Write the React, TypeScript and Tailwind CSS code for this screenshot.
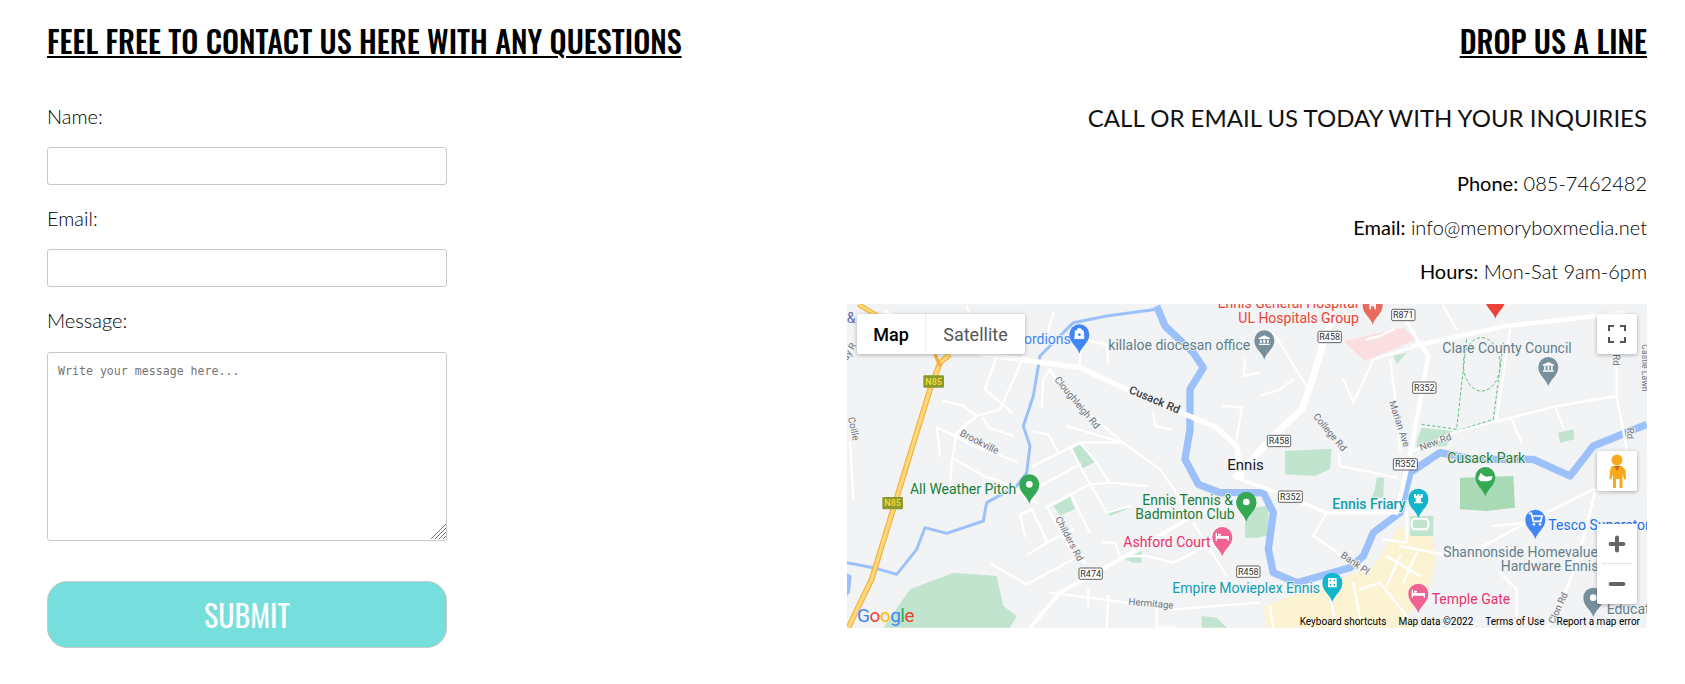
import { Plus, Minus } from "lucide-react";

const HEAD = "font-['Oswald','Liberation_Sans_Narrow','Roboto_Condensed','Liberation_Sans',sans-serif]";

// roads are traced in zoomed-up coords, the groups below scale them back down
const leftMinor: string[] = [
  "310,315 370,330 410,360 480,340 530,230 550,180",
  "410,360 350,410 335,500 330,570",
  "290,395 345,420 400,450 530,497",
  "290,395 300,480",
  "345,490 440,545 470,550 590,620",
  "430,365 445,395 520,420",
  "435,280 515,350",
  "435,280 470,180",
  "578,407 625,415 655,470",
  "580,510 720,440 850,440",
  "600,570 720,505",
  "680,390 850,440 960,520 1010,590 1045,650",
  "720,440 770,500 810,560 920,570",
  "690,450 720,510 800,650 870,630",
  "625,630 750,565 810,560",
  "540,655 575,640 620,735",
  "540,655 555,720",
  "565,775 620,740 700,700",
  "695,600 750,710",
  "620,630 690,760 735,800",
  "790,740 825,740 840,780 920,780 1000,800",
  "455,805 560,865 700,790",
  "30,440 40,610",
  "605,335 610,250 630,220",
  "630,220 680,300 850,440",
  "720,160 720,210",
  "750,135 800,145 805,200",
  "640,50 620,120",
  "380,30 385,50",
  "940,350 945,390 995,400",
  "1150,330 1205,335 1190,430",
  "1215,190 1210,240 1260,230",
  "1000,800 1120,740",
  "1060,680 1160,840",
  "630,890 860,920 1000,940 1260,920",
  "745,880 745,930",
  "805,900 800,995",
  "950,930 950,995 1010,995",
];

const rightMinor: string[] = [
  "310,250 340,320 400,190 530,150",
  "60,300 120,280 160,250",
  "100,110 200,270",
  "295,470 300,510 470,545",
  "945,330 970,395",
  "815,370 845,440",
  "810,100 770,370",
  "450,190 465,300 480,460",
  "510,470 640,410 950,330 1130,300",
  "1130,180 1130,300 1160,460",
  "760,690 860,680 1060,580 1110,590",
  "220,720 260,650",
  "220,720 350,810",
  "480,750 610,775 720,755 860,680",
  "430,730 500,740 500,640",
  "440,780 540,840",
  "360,880 420,860 500,960",
  "340,860 365,995",
  "270,900 290,995",
  "90,930 100,995",
  "480,780 440,870",
  "530,770 490,860",
  "780,830 830,880 830,960",
  "610,30 650,100",
  "380,130 420,120 460,100",
];

function Pin({ x, y, color, dot }: { x: number; y: number; color: string; dot?: boolean }) {
  return (
    <g>
      <path
        d={`M${x} ${y + 58} C${x - 6} ${y + 36} ${x - 30} ${y + 26} ${x - 30} ${y} A30 30 0 1 1 ${x + 30} ${y} C${x + 30} ${y + 26} ${x + 6} ${y + 36} ${x} ${y + 58}Z`}
        fill={color}
      />
      {dot && <circle cx={x} cy={y} r={10} fill="#fff" />}
    </g>
  );
}

function Bed({ x, y }: { x: number; y: number }) {
  return (
    <g fill="#fff">
      <path d={`M${x - 20} ${y - 12}h4v10h36v14h-4v-6h-32v6h-4z`} />
      <rect x={x - 13} y={y - 9} width={9} height={6} rx={2} />
    </g>
  );
}

function Museum({ x, y }: { x: number; y: number }) {
  return (
    <path
      d={`M${x} ${y - 14}l17 8v3h-34v-3zM${x - 13} ${y - 1}h5v10h-5zM${x - 3} ${y - 1}h6v10h-6zM${x + 8} ${y - 1}h5v10h-5zM${x - 16} ${y + 11}h32v4h-32z`}
      fill="#fff"
    />
  );
}

function Shield({ x, y, text, w = 70 }: { x: number; y: number; text: string; w?: number }) {
  return (
    <g>
      <rect x={x} y={y} width={w} height={34} rx={4} fill="#fff" stroke="#444" strokeWidth={2.5} />
      <text x={x + w / 2} y={y + 26} textAnchor="middle" fontSize={27} fill="#333">
        {text}
      </text>
    </g>
  );
}

function N85({ x, y }: { x: number; y: number }) {
  return (
    <g>
      <rect x={x} y={y} width={62} height={37} rx={3} fill="#8b9a2c" />
      <text x={x + 31} y={y + 28} textAnchor="middle" fontSize={27} fontWeight={500} fill="#f6dd3a">
        N85
      </text>
    </g>
  );
}

function Label({
  x,
  y,
  color,
  size = 42,
  rot,
  weight,
  children,
}: {
  x: number;
  y: number;
  color: string;
  size?: number;
  rot?: number;
  weight?: number;
  children: string;
}) {
  return (
    <text
      x={x}
      y={y}
      fill={color}
      fontSize={size}
      fontWeight={weight}
      stroke="#f2f3f5"
      strokeWidth={5}
      paintOrder="stroke"
      transform={rot ? `rotate(${rot} ${x} ${y})` : undefined}
    >
      {children}
    </text>
  );
}

const LEFT = "translate(-7 -8) scale(0.33333)";
const RIGHT = "translate(393 -8) scale(0.33333)";

function MapDrawing() {
  return (
    <svg viewBox="0 0 800 324" className="block h-full w-full font-['Roboto',sans-serif]">
      <rect width="800" height="324" fill="#f2f3f5" />
      <g transform={LEFT}>
        <g fill="#c0e4cd">
          <polygon points="130,995 210,880 340,830 470,840 490,930 530,960 510,995" />
          <polygon points="695,460 720,445 770,495 725,518" />
          <polygon points="640,630 690,603 705,640 660,658" />
          <polygon points="800,645 865,630 860,640 810,660" />
          <polygon points="855,790 905,765 905,800 880,800" />
          <polygon points="1085,960 1130,965 1160,995 1085,995" />
          <polygon points="1215,660 1260,630 1260,725 1215,725" />
        </g>
        <g fill="none" stroke="#9cc0f9" strokeLinejoin="round">
          <polyline strokeWidth={22} points="950,30 975,90 1060,170 1090,215 1050,280 1050,400 1035,490 1075,565 1140,590 1260,590" />
          <polyline strokeWidth={9} points="950,40 800,60 700,80 600,180 580,300 550,390 570,450 560,530 530,570 440,620 430,675 320,712 255,695 230,760 170,835 100,815 20,800" />
        </g>
        <polygon points="20,830 35,840 30,890 20,900" fill="#9cc0f9" />
        <g fill="none" stroke="#fff" strokeWidth={7} strokeLinejoin="round" strokeLinecap="round">
          {leftMinor.map((p) => (
            <polyline key={p} points={p} />
          ))}
          <polyline strokeWidth={16} points="136,50 430,175 720,215 860,280 1130,395 1190,450 1205,540" />
          <polyline strokeWidth={11} points="570,995 660,890 840,790 1040,670 1190,600" />
        </g>
        <g fill="none" strokeLinejoin="round">
          <polyline stroke="#f5b041" strokeWidth={17} points="25,995 95,850 270,280 300,200 330,175" />
          <polyline stroke="#fdd878" strokeWidth={10} points="25,995 95,850 270,280 300,200 330,175" />
          <polyline stroke="#f5b041" strokeWidth={10} points="285,175 300,210" />
          <polyline stroke="#f5b041" strokeWidth={15} points="55,25 130,70" />
          <polyline stroke="#fdd878" strokeWidth={9} points="55,25 130,70" />
        </g>
      </g>
      <g transform={RIGHT}>
        <polygon points="310,135 490,95 530,130 375,195" fill="#fbdfe0" />
        <polygon points="510,720 580,720 585,800 560,900 500,960 540,995 80,995 70,930 300,850 400,810 480,690" fill="#fcf3d2" />
        <g fill="#c0e4cd">
          <polygon points="135,465 275,458 270,520 225,540 135,535" />
          <polygon points="405,580 410,545 432,545 430,605 395,605" />
          <polygon points="955,410 1000,400 1003,430 960,440" />
          <polygon points="530,435 545,395 640,405 620,450 530,455" />
          <polygon points="510,660 580,660 580,720 510,720" />
          <polygon points="0,640 85,630 85,720 20,725 20,680" />
          <polygon points="460,180 500,170 470,205" />
        </g>
        <rect x={515} y={668} width={50} height={32} rx={10} fill="none" stroke="#fff" strokeWidth={6} />
        <polygon points="660,545 820,540 825,635 740,645 660,640" fill="#a8dab5" />
        <polyline
          fill="none"
          stroke="#9cc0f9"
          strokeWidth={22}
          strokeLinejoin="round"
          points="-60,590 70,590 100,650 85,760 100,830 170,860 330,815 370,780 400,710 480,650 510,530 600,470 700,490 880,490 990,540 1060,450 1220,385"
        />
        <g fill="none" stroke="#5cc07c" strokeWidth={3} strokeDasharray="10 6">
          <polyline points="680,130 650,400 545,385" />
          <polyline points="790,140 760,370 650,405" />
          <ellipse cx={725} cy={205} rx={55} ry={80} />
        </g>
        <g fill="none" stroke="#fff" strokeWidth={7} strokeLinejoin="round" strokeLinecap="round">
          {rightMinor.map((p) => (
            <polyline key={p} points={p} />
          ))}
          <polyline strokeWidth={20} points="-10,540 110,410 185,340 215,260 250,140 280,60" />
          <polyline strokeWidth={13} points="470,650 510,480 565,180 540,140" />
          <polyline strokeWidth={14} points="520,150 800,90 1070,60 1150,50" />
          <polyline strokeWidth={11} points="490,60 545,155" />
          <polyline strokeWidth={9} points="1065,590 1010,800 960,930 920,995" />
          <polyline strokeWidth={11} points="0,550 110,590 260,650 470,650" />
        </g>
      </g>
      {/* labels go last so roads from the other half can't cover them */}
      <g transform={LEFT}>
        <N85 x={250} y={238} />
        <N85 x={127} y={603} />
        <Shield x={717} y={816} text="R474" />
        <Shield x={1190} y={810} text="R458" />
        <Label x={20} y={82} color="#5c6bc0">&amp;</Label>
        <Label x={552} y={145} color="#4285f4">ordions</Label>
        <Label x={805} y={162} color="#637f8c">killaloe diocesan office</Label>
        <Label x={865} y={290} color="#3c4043" size={34} rot={23} weight={500}>Cusack Rd</Label>
        <Label x={642} y={252} color="#70757a" size={29} rot={50}>Cloughleigh Rd</Label>
        <Label x={358} y={418} color="#70757a" size={29} rot={27}>Brookville</Label>
        <Label x={24} y={365} color="#70757a" size={29} rot={78}>Coille</Label>
        <Label x={22} y={195} color="#70757a" size={29} rot={-60}>ay R</Label>
        <Label x={210} y={593} color="#188038">All Weather Pitch</Label>
        <Label x={907} y={627} color="#188038">Ennis Tennis &amp;</Label>
        <Label x={886} y={668} color="#188038">Badminton Club</Label>
        <Label x={645} y={668} color="#70757a" size={29} rot={62}>Childers Rd</Label>
        <Label x={850} y={752} color="#e8336d">Ashford Court</Label>
        <Label x={865} y={926} color="#70757a" size={29} rot={5}>Hermitage</Label>
        <Label x={997} y={890} color="#129eaf">Empire Movieplex Ennis</Label>
        <Label x={1162} y={522} color="#202124" size={45}>Ennis</Label>
        <Label x={1133} y={36} color="#ea4335">Ennis General Hospital</Label>
        <Label x={1195} y={80} color="#ea4335">UL Hospitals Group</Label>
        <Pin x={718} y={115} color="#4285f4" />
        <path d="M706 104h24l2 24h-28zM711 104a7 7 0 0 1 14 0" fill="#fff" stroke="#fff" strokeWidth={2} />
        <circle cx={718} cy={116} r={4} fill="#4285f4" />
        <Pin x={568} y={565} color="#34a853" dot />
        <Pin x={1219} y={618} color="#34a853" dot />
        <Pin x={1147} y={723} color="#f06292" />
        <Bed x={1147} y={722} />
      </g>
      <g transform={RIGHT}>
        <Shield x={455} y={40} text="R871" />
        <Shield x={234} y={106} text="R458" />
        <Shield x={518} y={258} text="R352" />
        <Shield x={82} y={418} text="R458" />
        <Shield x={460} y={488} text="R352" w={72} />
        <Shield x={115} y={585} text="R352" w={72} />
        <Label x={607} y={170} color="#637f8c">Clare County Council</Label>
        <Label x={622} y={500} color="#188038">Cusack Park</Label>
        <Label x={543} y={464} color="#70757a" size={29} rot={-20}>New Rd</Label>
        <Label x={447} y={318} color="#70757a" size={29} rot={72}>Marian Ave</Label>
        <Label x={218} y={362} color="#70757a" size={29} rot={50}>College Rd</Label>
        <Label x={277} y={638} color="#129eaf" weight={500}>Ennis Friary</Label>
        <Label x={925} y={702} color="#1a73e8">Tesco Superstore</Label>
        <Label x={610} y={782} color="#637f8c">Shannonside Homevalue</Label>
        <Label x={782} y={824} color="#637f8c">Hardware Ennis</Label>
        <Label x={575} y={924} color="#e8336d">Temple Gate</Label>
        <Label x={300} y={782} color="#70757a" size={29} rot={35}>Bank Pl</Label>
        <Label x={1118} y={175} color="#70757a" size={29} rot={90}>Rd</Label>
        <Label x={1205} y={145} color="#70757a" size={26} rot={90}>Castle Lawn</Label>
        <Label x={1160} y={395} color="#70757a" size={29} rot={90}>Rd</Label>
        <Label x={942} y={985} color="#70757a" size={29} rot={-65}>Clon Rd</Label>
        <Label x={1100} y={955} color="#637f8c">Educat</Label>
        <Pin x={398} y={28} color="#ea6b5e" />
        <path d="M388 16h5v9h10v-9h5v24h-5v-9h-10v9h-5z" fill="#fff" />
        <Pin x={73} y={133} color="#78909c" />
        <Museum x={73} y={132} />
        <Pin x={925} y={213} color="#78909c" />
        <Museum x={925} y={212} />
        <Pin x={19} y={618} color="#34a853" dot />
        <Pin x={736} y={543} color="#34a853" />
        <path d="M714 548l8-18 6 6 10 6 20-2-4 12-10 4h-22z" fill="#fff" />
        <Pin x={535} y={608} color="#12b5cb" />
        <path d="M522 594h6v5h4v-5h6v5h4v-5h6v12h-5v12h5v4h-26v-4h5v-12h-5z" fill="#fff" />
        <Pin x={886} y={671} color="#4285f4" />
        <path d="M866 652h8l6 24h22l4-16h-30" fill="none" stroke="#fff" strokeWidth={5} />
        <circle cx={882} cy={685} r={4} fill="#fff" />
        <circle cx={900} cy={685} r={4} fill="#fff" />
        <Pin x={277} y={860} color="#12b5cb" />
        <path d="M264 846h26v28h-26zM269 851v5h4v-5zM281 851v5h4v-5zM269 864v5h4v-5zM281 864v5h4v-5z" fill="#fff" fillRule="evenodd" />
        <Pin x={535} y={893} color="#f06292" />
        <Bed x={535} y={893} />
        <Pin x={1060} y={905} color="#78909c" dot />
        <Pin x={766} y={10} color="#ea4335" />
      </g>
    </svg>
  );
}

function MapControls() {
  return (
    <>
      <div className="absolute left-[10px] top-[10px] flex h-[40px] overflow-hidden rounded-[2px] bg-white text-[18px] shadow-[0_1px_4px_rgba(0,0,0,0.3)]">
        <span className="flex w-[69px] items-center justify-center border-r border-[#eee] font-medium text-black">Map</span>
        <span className="flex w-[99px] items-center justify-center text-[#565656]">Satellite</span>
      </div>
      <div className="absolute right-[10px] top-[10px] flex h-[40px] w-[40px] items-center justify-center rounded-[2px] bg-white shadow-[0_1px_4px_rgba(0,0,0,0.3)]">
        <svg width="18" height="18" viewBox="0 0 18 18" fill="none" stroke="#555" strokeWidth="2">
          <path d="M1 6V1h5M12 1h5v5M17 12v5h-5M6 17H1v-5" />
        </svg>
      </div>
      <div className="absolute right-[10px] top-[147px] flex h-[40px] w-[40px] items-center justify-center rounded-[2px] bg-white shadow-[0_1px_4px_rgba(0,0,0,0.3)]">
        <svg width="18" height="34" viewBox="0 0 18 34" fill="#f7a91c">
          <circle cx="9" cy="6" r="5.5" />
          <path d="M4 12h10l3.5 4 .5 9-2 .5-1.5-6V34h-3V25H8v9H5V19.5L3.5 25.5l-2-.5.5-9z" />
          <path d="M6 12l3 5 3-5z" fill="#d9661f" />
        </svg>
      </div>
      <div className="absolute right-[10px] top-[220px] flex h-[80px] w-[40px] flex-col items-center rounded-[2px] bg-white shadow-[0_1px_4px_rgba(0,0,0,0.3)]">
        <span className="flex h-[39px] items-center">
          <Plus size={22} strokeWidth={4} color="#666" absoluteStrokeWidth />
        </span>
        <span className="h-px w-[30px] bg-[#e6e6e6]" />
        <span className="flex h-[40px] items-center">
          <Minus size={22} strokeWidth={4} color="#666" absoluteStrokeWidth />
        </span>
      </div>
      <div className="absolute bottom-[3px] left-[10px] font-['Roboto',sans-serif] text-[19px] leading-none tracking-[-0.5px]">
        <span className="text-[#4285f4]">G</span>
        <span className="text-[#ea4335]">o</span>
        <span className="text-[#fbbc05]">o</span>
        <span className="text-[#4285f4]">g</span>
        <span className="text-[#34a853]">l</span>
        <span className="text-[#ea4335]">e</span>
      </div>
      <div className="absolute bottom-0 right-[7px] flex text-[10px] leading-[12px] text-black">
        <span className="mr-[12px]">Keyboard shortcuts</span>
        <span className="mr-[12px]">Map data ©2022</span>
        <span className="mr-[12px]">Terms of Use</span>
        <span>Report a map error</span>
      </div>
    </>
  );
}

function Field({ label, big }: { label: string; big?: boolean }) {
  return (
    <label className="block">
      <span className="block text-[20px] font-light leading-[24px] text-black">{label}</span>
      {big ? (
        <div className="relative mt-[20px] h-[189px] w-[400px]">
          <textarea
            placeholder="Write your message here..."
            className="block h-full w-full resize-none rounded-[3px] border border-[#c8c8c8] px-[10px] py-[10px] font-['DejaVu_Sans_Mono',monospace] text-[11.6px] leading-[16px] placeholder:text-[#757575]"
          />
          <svg
            width="15"
            height="15"
            viewBox="0 0 15 15"
            stroke="#777"
            strokeWidth="1"
            className="pointer-events-none absolute bottom-[2px] right-[1px]"
          >
            <path d="M0 15L15 0M4 15L15 4M8 15L15 8M12 15L15 12" />
          </svg>
        </div>
      ) : (
        <input className="mt-[19px] block h-[38px] w-[400px] rounded-[3px] border border-[#c8c8c8]" />
      )}
    </label>
  );
}

export default function App() {
  return (
    <div className="flex h-[684px] justify-between overflow-hidden bg-white pl-[47px] pr-[38px] pt-[20px] font-['Lato',sans-serif] text-[#111]">
      <div className="w-[700px]">
        <h2 className={`text-[30.3px] font-medium uppercase leading-[42px] text-black underline decoration-2 underline-offset-[2px] ${HEAD}`}>
          Feel free to contact us here with any questions
        </h2>
        <form className="mt-[42px] flex flex-col gap-[21px]">
          <Field label="Name:" />
          <Field label="Email:" />
          <Field label="Message:" big />
          <button
            type="button"
            className={`mt-[19px] h-[67px] w-[400px] rounded-[20px] border border-[#c8c8c8] bg-[#76dedc] text-[30px] text-white ${HEAD}`}
          >
            SUBMIT
          </button>
        </form>
      </div>
      <div className="w-[800px] text-right">
        <h2 className={`text-[30.3px] font-medium uppercase leading-[42px] text-black underline decoration-2 underline-offset-[2px] ${HEAD}`}>
          Drop us a line
        </h2>
        <p className="mt-[40px] text-[24px] leading-[32px]">CALL OR EMAIL US TODAY WITH YOUR INQUIRIES</p>
        <div className="mt-[37px] flex flex-col gap-[20px] text-[20px] font-light leading-[24px] text-black">
          <p><span className="font-normal">Phone:</span> 085-7462482</p>
          <p><span className="font-normal">Email:</span> info@memoryboxmedia.net</p>
          <p><span className="font-normal">Hours:</span> Mon-Sat 9am-6pm</p>
        </div>
        <div className="relative mt-[21px] h-[324px] w-[800px] overflow-hidden text-left font-['Roboto',sans-serif]">
          <MapDrawing />
          <MapControls />
        </div>
      </div>
    </div>
  );
}
